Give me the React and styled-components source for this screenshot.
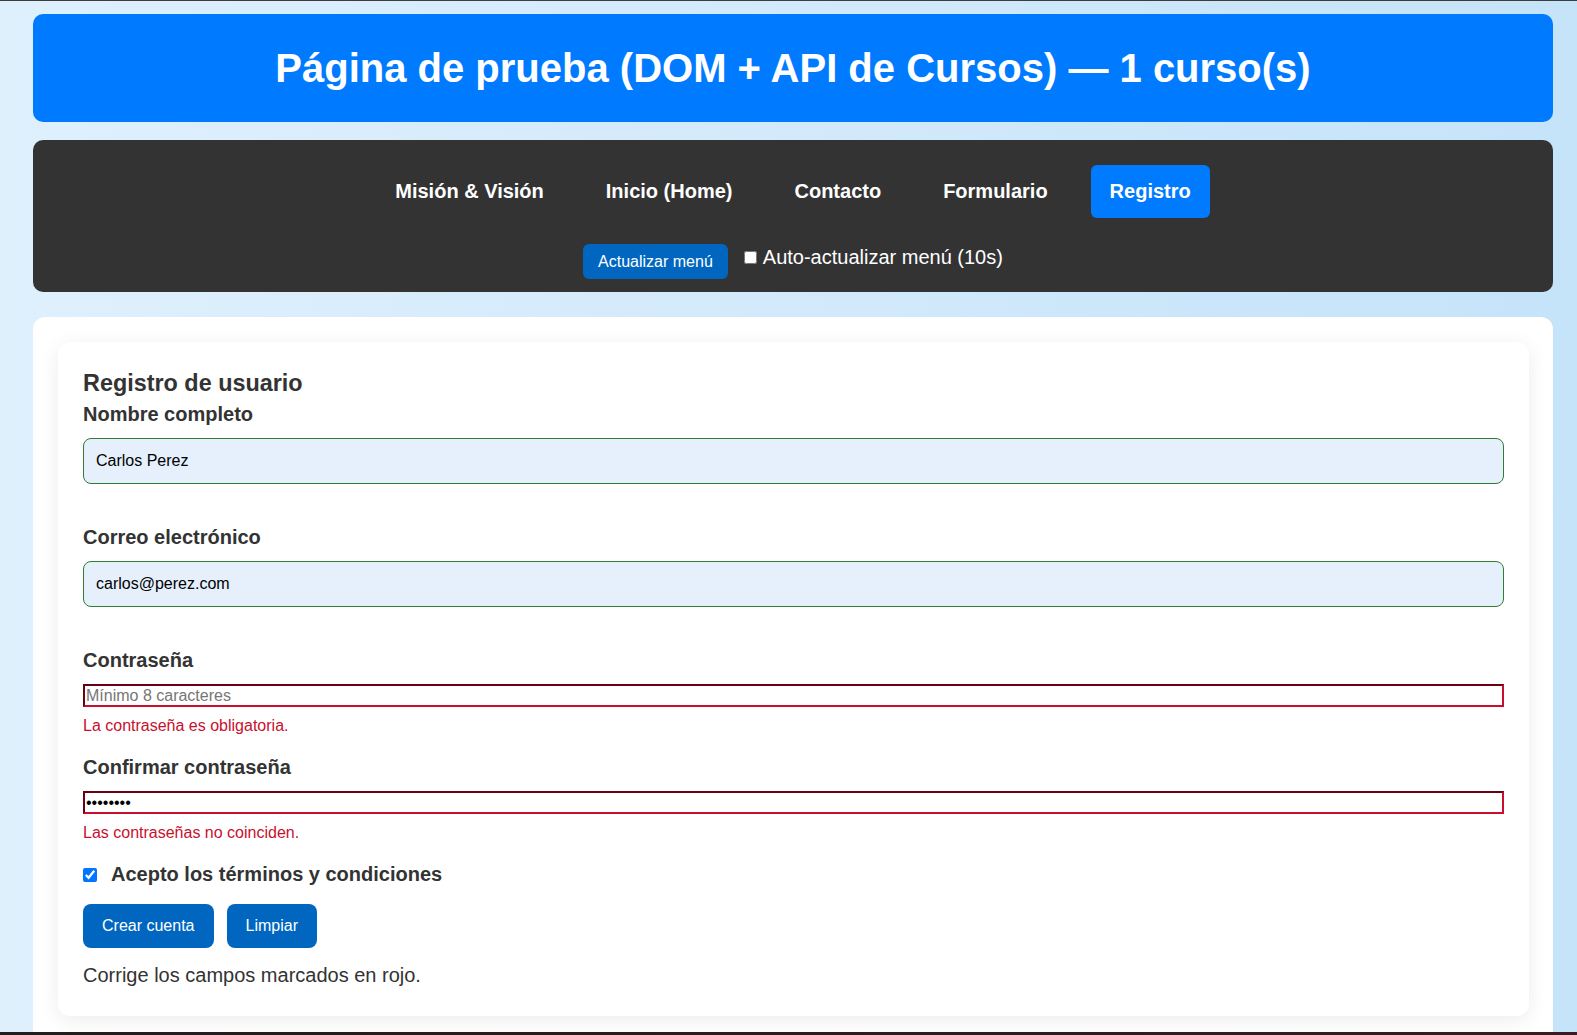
import React from 'react';
import styled, { createGlobalStyle } from 'styled-components';

const GlobalStyle = createGlobalStyle`
    body {
        margin: 0;
        border-top: 1px solid #3d3d3d;
        font-family: "Liberation Sans", Arial, sans-serif;
        background: linear-gradient(to right, #dff0fd, #c5e3f9);
        min-height: 100vh;
    }
`;

const Page = styled.div`
    padding: 13px 24px 0 33px;
    display: flex;
    flex-direction: column;
    gap: 18px;
`;

const Header = styled.header`
    background: #007bff;
    border-radius: 10px;
    padding: 31px 20px;
`;

const Title = styled.h1`
    margin: 0;
    color: #fff;
    font-size: 40px;
    line-height: 46px;
    font-weight: 700;
    text-align: center;
`;

const Nav = styled.nav`
    background: #333;
    border-radius: 10px;
    padding: 25px 0 13px;
    display: flex;
    flex-direction: column;
    align-items: center;
    gap: 26px;
`;

const LinkRow = styled.div`
    display: flex;
    gap: 24px;
`;

const NavLink = styled.a`
    color: #fff;
    font-size: 20px;
    line-height: 23px;
    font-weight: 700;
    padding: 15px 19px;
    border-radius: 6px;
    text-decoration: none;
    background: ${({ $active }) => ($active ? '#007bff' : 'transparent')};
`;

const Controls = styled.div`
    display: flex;
    align-items: flex-start;
    gap: 16px;
`;

const SmallButton = styled.button`
    background: #0066c0;
    color: #fff;
    border: none;
    border-radius: 6px;
    padding: 8px 15px;
    font-family: inherit;
    font-size: 16px;
    line-height: 19px;
`;

const AutoLabel = styled.label`
    color: #fff;
    font-size: 20px;
    line-height: 23px;
    margin-top: 2px;
    input {
        width: 13px;
        height: 13px;
        margin: 0 6px 2px 0;
    }
`;

const Main = styled.main`
    margin-top: 7px;
    background: #fff;
    border-radius: 12px 12px 0 0;
    padding: 25px 24px 16px 25px;
`;

const Card = styled.section`
    background: #fff;
    border-radius: 12px;
    box-shadow: 0 4px 20px rgba(0, 0, 0, 0.08);
    padding: 25px 25px 29px;
    color: #333;
`;

const FormTitle = styled.h3`
    margin: 3px 0 6px;
    font-size: 23.4px;
    line-height: 27px;
    font-weight: 700;
`;

const Field = styled.div`
    margin-bottom: 21px;
`;

const Label = styled.label`
    display: block;
    font-size: 20px;
    line-height: 23px;
    font-weight: 700;
    margin-bottom: 12px;
`;

const TextInput = styled.input`
    display: block;
    box-sizing: border-box;
    width: 100%;
    height: 46px;
    padding: 0 12px;
    border: 1px solid #2e7d32;
    border-radius: 8px;
    background: #e6f0fc;
    font-family: inherit;
    font-size: 16px;
    color: #000;
    outline: none;
`;

const BadInput = styled.input`
    display: block;
    box-sizing: border-box;
    width: 100%;
    height: 23px;
    padding: 0 1px;
    border-style: solid;
    border-width: 2px;
    border-color: #6b0012 #c8102e #c8102e #6b0012;
    border-radius: 0;
    background: #fff;
    font-family: inherit;
    font-size: 16px;
    color: #000;
    outline: none;
    &::placeholder {
        color: #767676;
    }
`;

const ErrorText = styled.div`
    margin-top: 10px;
    min-height: 11px;
    font-size: 16px;
    line-height: 18px;
    color: #c8102e;
`;

const TermsRow = styled.label`
    display: flex;
    align-items: center;
    font-size: 20px;
    line-height: 23px;
    font-weight: 700;
    input {
        width: 14px;
        height: 14px;
        margin: 0 14px 0 0;
        accent-color: #0075ff;
    }
`;

const Buttons = styled.div`
    display: flex;
    gap: 13px;
    margin-top: 18px;
`;

const FormButton = styled.button`
    background: #0066c0;
    color: #fff;
    border: none;
    border-radius: 8px;
    padding: 13px 19px;
    font-family: inherit;
    font-size: 16px;
    line-height: 18px;
`;

const Status = styled.p`
    margin: 16px 0 0;
    font-size: 20px;
    line-height: 23px;
    color: #333;
`;

const Footer = styled.footer`
    height: 60px;
    background: linear-gradient(to right, #241c1e, #3a1c20);
`;

const links = ['Misión & Visión', 'Inicio (Home)', 'Contacto', 'Formulario', 'Registro'];

const App = () => {
    return (
        <>
            <GlobalStyle />
            <Page>
                <Header>
                    <Title>Página de prueba (DOM + API de Cursos) — 1 curso(s)</Title>
                </Header>
                <Nav>
                    <LinkRow>
                        {links.map(link => (
                            <NavLink key={link} href="#" $active={link === 'Registro'}>
                                {link}
                            </NavLink>
                        ))}
                    </LinkRow>
                    <Controls>
                        <SmallButton>Actualizar menú</SmallButton>
                        <AutoLabel>
                            <input type="checkbox" />
                            Auto-actualizar menú (10s)
                        </AutoLabel>
                    </Controls>
                </Nav>
                <Main>
                    <Card>
                        <FormTitle>Registro de usuario</FormTitle>
                        <Field>
                            <Label>Nombre completo</Label>
                            <TextInput defaultValue="Carlos Perez" />
                            <ErrorText />
                        </Field>
                        <Field>
                            <Label>Correo electrónico</Label>
                            <TextInput defaultValue="carlos@perez.com" />
                            <ErrorText />
                        </Field>
                        <Field>
                            <Label>Contraseña</Label>
                            <BadInput type="password" placeholder="Mínimo 8 caracteres" />
                            <ErrorText>La contraseña es obligatoria.</ErrorText>
                        </Field>
                        <Field>
                            <Label>Confirmar contraseña</Label>
                            <BadInput type="password" defaultValue="12345678" />
                            <ErrorText>Las contraseñas no coinciden.</ErrorText>
                        </Field>
                        <TermsRow>
                            <input type="checkbox" defaultChecked />
                            Acepto los términos y condiciones
                        </TermsRow>
                        <Buttons>
                            <FormButton>Crear cuenta</FormButton>
                            <FormButton>Limpiar</FormButton>
                        </Buttons>
                        <Status>Corrige los campos marcados en rojo.</Status>
                    </Card>
                </Main>
            </Page>
            <Footer />
        </>
    );
};

export default App;
